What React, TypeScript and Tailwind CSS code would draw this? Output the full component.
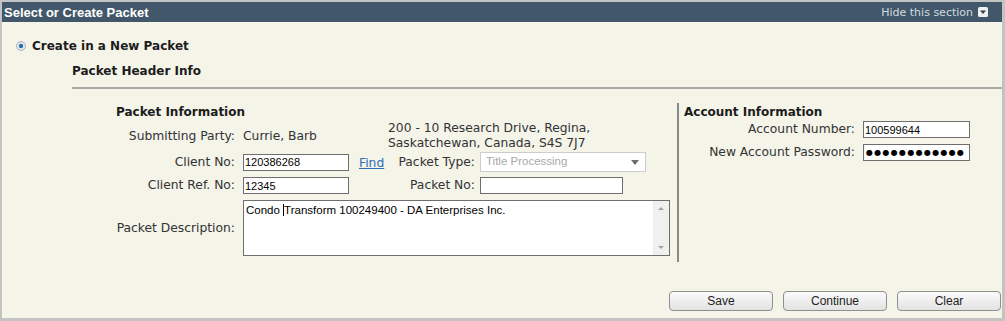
import React from "react";

const Label = ({children, w}: {children: React.ReactNode; w: string}) => (
    <div className={`${w} shrink-0 text-right pr-[8px] text-[12.3px] text-[#333]`}>{children}</div>
);

const Field = ({value, w}: {value: string; w: string}) => (
    <input
        readOnly
        value={value}
        className={`${w} h-[17px] border border-[#6e6e6e] bg-white px-[1px] text-[11px] text-black font-['Liberation_Sans',Arial,sans-serif] outline-none`}
    />
);

const Btn = ({label}: {label: string}) => (
    <button
        type="button"
        className="w-[104px] h-[20px] rounded-[4px] border border-[#8f8f8f] bg-gradient-to-b from-[#fbfbfb] to-[#e2e2e2] text-[12px] text-[#222] font-['Liberation_Sans',Arial,sans-serif]"
    >
        {label}
    </button>
);

export default function App() {
    return (
        <div className="w-[1005px] h-[321px] flex flex-col bg-[#f4f4e9] border-t-2 border-l-2 border-r-[3px] border-b-[3px] border-[#c3c3c3] font-['DejaVu_Sans',Verdana,sans-serif] overflow-hidden">
            {/* title bar */}
            <div className="h-[20px] shrink-0 bg-[#42586a] flex items-center justify-between pl-[2px] pr-[14px]">
                <span className="text-[13px] font-bold text-white leading-none font-['Liberation_Sans',Arial,sans-serif]">
                    Select or Create Packet
                </span>
                <div className="flex items-center">
                    <span className="text-[11px] text-[#d3dbe0] leading-none">Hide this section</span>
                    <svg width="10" height="10" viewBox="0 0 10 10" className="ml-[5px]">
                        <rect x="0" y="0" width="10" height="10" rx="1.5" fill="#eef0f2"/>
                        <path d="M2 3.5 H8 L5 7 Z" fill="#2f3f4c"/>
                    </svg>
                </div>
            </div>

            {/* radio */}
            <div className="mt-[16px] h-[16px] flex items-center pl-[14px]">
                <svg width="10" height="10" viewBox="0 0 10 10">
                    <circle cx="5" cy="5" r="4.5" fill="#e4e8ec" stroke="#a9b3bc"/>
                    <circle cx="5" cy="5" r="2.2" fill="#2e6ea8"/>
                </svg>
                <span className="ml-[6px] text-[12px] font-bold text-[#1c1c1c]">Create in a New Packet</span>
            </div>

            <div className="mt-[9px] h-[16px] flex items-center pl-[70px] text-[12px] font-bold text-[#1c1c1c]">
                Packet Header Info
            </div>
            <div className="mt-[8px] ml-[70px] h-[2px] bg-[#a9a9a9]"/>

            <div className="mt-[14px] flex">
                {/* left section */}
                <div className="ml-[114px] w-[561px] flex flex-col">
                    <div className="h-[18px] flex items-center text-[12px] font-bold text-[#1c1c1c]">Packet Information</div>

                    <div className="flex items-center">
                        <Label w="w-[127px]">Submitting Party:</Label>
                        <div className="w-[145px] shrink-0 text-[12.3px] text-[#333]">Currie, Barb</div>
                        <div className="text-[12.3px] text-[#333] leading-[15px]">
                            200 - 10 Research Drive, Regina,<br/>Saskatchewan, Canada, S4S 7J7
                        </div>
                    </div>

                    <div className="mt-[1px] h-[20px] flex items-center">
                        <Label w="w-[127px]">Client No:</Label>
                        <Field value="120386268" w="w-[106px]"/>
                        <div className="w-[39px] shrink-0 pl-[10px]">
                            <a className="text-[12.3px] text-[#2b6fb5] underline cursor-pointer">Find</a>
                        </div>
                        <div className="w-[92px] shrink-0 text-right pr-[5px] text-[12.3px] text-[#333]">Packet Type:</div>
                        <div className="w-[166px] h-[20px] border border-[#cdcdcd] bg-white flex items-center justify-between pl-[5px] pr-[6px]">
                            <span className="text-[11.5px] text-[#a9a9a9] font-['Liberation_Sans',Arial,sans-serif]">Title Processing</span>
                            <svg width="8" height="5" viewBox="0 0 8 5">
                                <path d="M0 0 H8 L4 5 Z" fill="#6f6f6f"/>
                            </svg>
                        </div>
                    </div>

                    <div className="mt-[5px] h-[17px] flex items-center">
                        <Label w="w-[127px]">Client Ref. No:</Label>
                        <Field value="12345" w="w-[106px]"/>
                        <div className="w-[131px] shrink-0 text-right pr-[5px] text-[12.3px] text-[#333]">Packet No:</div>
                        <Field value="" w="w-[143px]"/>
                    </div>

                    <div className="mt-[6px] h-[56px] flex items-center">
                        <Label w="w-[127px]">Packet Description:</Label>
                        <div className="w-[427px] h-[56px] border border-[#6e6e6e] bg-white flex">
                            <div className="flex-1 pl-[2px] pt-[2px] text-[11.5px] leading-[14px] text-black font-['Liberation_Sans',Arial,sans-serif] whitespace-nowrap">
                                Condo <span className="inline-block w-[1px] h-[12px] bg-black align-[-2px]"/>Transform 100249400 - DA Enterprises Inc.
                            </div>
                            <div className="w-[16px] bg-[#f0f0f0] flex flex-col items-center justify-between py-[6px]">
                                <svg width="6" height="3" viewBox="0 0 6 3"><path d="M0 3 H6 L3 0 Z" fill="#a3a3a3"/></svg>
                                <svg width="6" height="3" viewBox="0 0 6 3"><path d="M0 0 H6 L3 3 Z" fill="#a3a3a3"/></svg>
                            </div>
                        </div>
                    </div>
                </div>

                {/* right section */}
                <div className="h-[159px] border-l-2 border-[#8a8a8a] pl-[5px] flex flex-col">
                    <div className="h-[18px] flex items-center text-[12px] font-bold text-[#1c1c1c]">Account Information</div>
                    <div className="h-[17px] flex items-center">
                        <Label w="w-[179px]">Account Number:</Label>
                        <Field value="100599644" w="w-[107px]"/>
                    </div>
                    <div className="mt-[6px] h-[17px] flex items-center">
                        <Label w="w-[179px]">New Account Password:</Label>
                        <div className="w-[107px] h-[17px] border border-[#6e6e6e] bg-white pl-[2px] flex items-center text-[8px] tracking-[1.3px] leading-none text-black overflow-hidden">
                            ●●●●●●●●●●●●
                        </div>
                    </div>
                </div>
            </div>

            <div className="mt-[29px] flex justify-end gap-[10px] pr-[1px]">
                <Btn label="Save"/>
                <Btn label="Continue"/>
                <Btn label="Clear"/>
            </div>
        </div>
    );
}
